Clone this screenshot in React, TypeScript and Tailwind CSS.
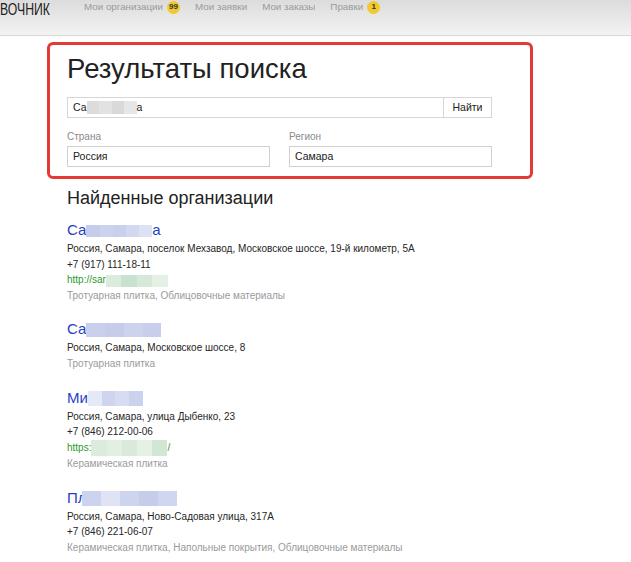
import type { ReactNode } from "react";

const font = { fontFamily: '"Liberation Sans", Arial, sans-serif' };

function Pix({ className, cells }: { className: string; cells: string[] }) {
  return (
    <span className={`inline-flex align-middle ${className}`}>
      {cells.map((c, i) => (
        <span key={i} className={`h-full flex-1 ${c}`} />
      ))}
    </span>
  );
}

function Badge({ children }: { children: ReactNode }) {
  return (
    <span className="ml-[4px] inline-flex h-[13px] min-w-[13px] items-center justify-center rounded-full bg-[#f0c92e] px-[2px] text-[8px] font-bold leading-none text-[#333]">
      {children}
    </span>
  );
}

function Header() {
  return (
    <header className="flex h-[36px] items-start border-b border-[#d8d8d8] bg-gradient-to-b from-[#dcdcdc] to-[#f3f3f3]">
      <span
        className="mt-[2px] inline-block w-[70px] origin-left scale-x-[0.72] whitespace-nowrap text-[17px] leading-[16px] text-[#222]"
        style={{ fontFamily: '"Liberation Sans Narrow", "Liberation Sans", Arial, sans-serif' }}
      >
        ВОЧНИК
      </span>
      <nav className="ml-[14px] flex items-center gap-[15px] pt-0 text-[9.8px] leading-[14px] text-[#9a9a9a]">
        <span className="flex items-center">
          Мои организации <Badge>99</Badge>
        </span>
        <span>Мои заявки</span>
        <span>Мои заказы</span>
        <span className="flex items-center">
          Правки <Badge>1</Badge>
        </span>
      </nav>
    </header>
  );
}

function SearchBox() {
  return (
    <div className="mt-[6px] w-[486px] rounded-[6px] border-[3px] border-[#e53935] pb-[9px] pl-[17px] pt-[8px]">
      <h1 className="text-[27.5px] leading-[32px] text-[#222]">Результаты поиска</h1>
      <div className="mt-[12px] flex h-[21px] w-[425px]">
        <div className="flex flex-1 items-center border border-[#d6d6d6] px-[5px] text-[10.5px] text-[#222]">
          Са
          <Pix className="h-[13px] w-[50px]" cells={["bg-[#dcdcdc]", "bg-[#e2e2e2]", "bg-[#d9d9d9]", "bg-[#e6e6e6]"]} />
          а
        </div>
        <button className="w-[48px] border border-l-0 border-[#d6d6d6] bg-white text-[10.5px] text-[#222]">
          Найти
        </button>
      </div>
      <div className="mt-[11px] grid w-[425px] grid-cols-2 gap-[19px]">
        <Field label="Страна" value="Россия" />
        <Field label="Регион" value="Самара" />
      </div>
    </div>
  );
}

function Field({ label, value }: { label: string; value: string }) {
  return (
    <div>
      <div className="mb-[1px] text-[10px] leading-[16px] text-[#8a8a8a]">{label}</div>
      <div className="flex h-[21px] items-center border border-[#d0d0d0] px-[5px] text-[10.5px] text-[#222]">
        {value}
      </div>
    </div>
  );
}

function Org({
  name,
  address,
  phone,
  url,
  cats,
}: {
  name: ReactNode;
  address: string;
  phone?: string;
  url?: ReactNode;
  cats: string;
}) {
  return (
    <div className="mb-[15px]">
      <div className="text-[15px] leading-[22px] text-[#1f3fc4]">{name}</div>
      <div className="text-[10px] leading-[15.6px] text-[#262626]">{address}</div>
      {phone && <div className="text-[10px] leading-[15.6px] text-[#262626]">{phone}</div>}
      {url && <div className="text-[10px] leading-[15.6px] text-[#2a9a2a]">{url}</div>}
      <div className="text-[10px] leading-[15.6px] text-[#9a9a9a]">{cats}</div>
    </div>
  );
}

export default function App() {
  return (
    <div className="min-h-[562px] w-[631px] overflow-hidden bg-white" style={font}>
      <Header />
      <main className="pl-[47px]">
        <SearchBox />
        <div className="pl-[20px]">
          <h2 className="mt-[7px] text-[18px] leading-[24px] text-[#222]">Найденные организации</h2>
          <div className="mt-[9px]">
            <Org
              name={
                <>
                  Са
                  <Pix className="h-[12px] w-[66px]" cells={["bg-[#c6cdea]", "bg-[#cdd3ed]", "bg-[#c9d0eb]", "bg-[#d3d8f0]", "bg-[#dde1f4]"]} />
                  а
                </>
              }
              address="Россия, Самара, поселок Мехзавод, Московское шоссе, 19-й километр, 5А"
              phone="+7 (917) 111-18-11"
              url={
                <>
                  http://sar
                  <Pix className="h-[12px] w-[62px]" cells={["bg-[#dcecdc]", "bg-[#c8e2d0]", "bg-[#d6e9d8]", "bg-[#e6f1e6]"]} />
                </>
              }
              cats="Тротуарная плитка, Облицовочные материалы"
            />
            <Org
              name={
                <>
                  Са
                  <Pix className="h-[14px] w-[75px]" cells={["bg-[#c9d0ec]", "bg-[#c6cdea]", "bg-[#ccd3ed]", "bg-[#c8cfeb]"]} />
                </>
              }
              address="Россия, Самара, Московское шоссе, 8"
              cats="Тротуарная плитка"
            />
            <Org
              name={
                <>
                  Ми
                  <Pix className="h-[15px] w-[55px]" cells={["bg-[#e4e8f7]", "bg-[#cfd5ef]", "bg-[#d7dcf2]", "bg-[#cbd2ee]"]} />
                </>
              }
              address="Россия, Самара, улица Дыбенко, 23"
              phone="+7 (846) 212-00-06"
              url={
                <>
                  https:
                  <Pix className="h-[16px] w-[76px]" cells={["bg-[#dcecdc]", "bg-[#e3efe3]", "bg-[#d9ead9]", "bg-[#e6f1e6]", "bg-[#d2e6d4]"]} />
                  /
                </>
              }
              cats="Керамическая плитка"
            />
            <Org
              name={
                <>
                  Пл
                  <Pix className="-ml-[5px] h-[15px] w-[95px]" cells={["bg-[#ccd3ee]", "bg-[#dfe3f5]", "bg-[#cdd4ee]", "bg-[#c6cdea]", "bg-[#d0d6ef]"]} />
                </>
              }
              address="Россия, Самара, Ново-Садовая улица, 317А"
              phone="+7 (846) 221-06-07"
              cats="Керамическая плитка, Напольные покрытия, Облицовочные материалы"
            />
          </div>
        </div>
      </main>
    </div>
  );
}
